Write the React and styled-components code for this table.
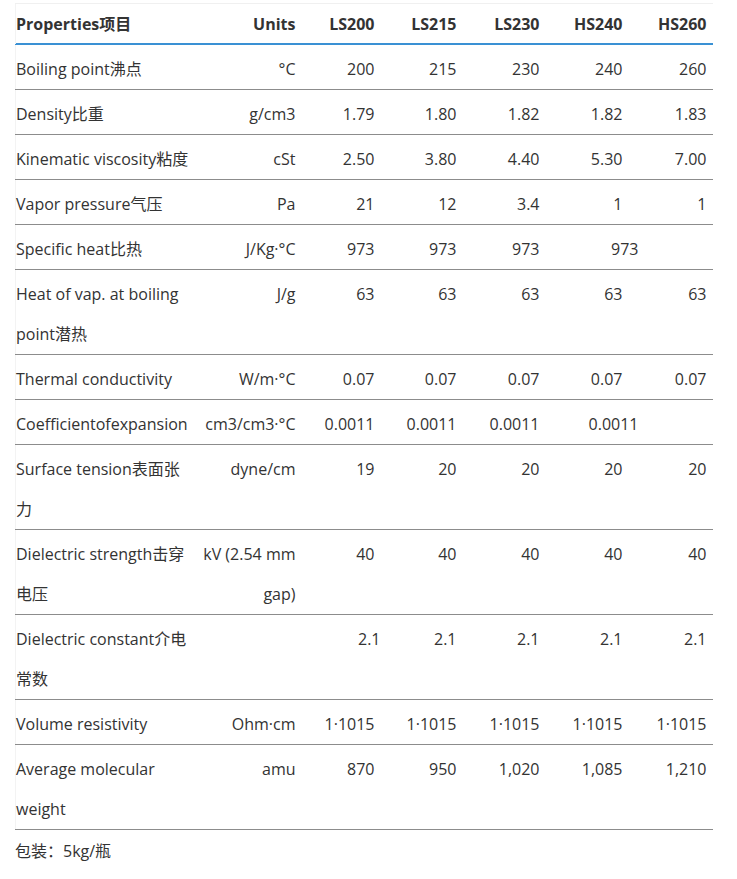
import React from 'react'
import styled, { createGlobalStyle } from 'styled-components'

const GlobalStyle = createGlobalStyle`
  body {
    margin: 0;
    background: #ffffff;
    font-family: "Open Sans", "Noto Sans CJK SC", sans-serif;
    color: #333333;
  }
`;

const Page = styled.div`
  padding: 3px 0 0 15px;
  width: 697px;
`;

const Table = styled.table`
  width: 697px;
  table-layout: fixed;
  border-collapse: collapse;
  border-top: 1px solid #f0f0f0;
  border-left: 1px solid #f3f3f3;
  font-size: 16px;
`;

const HeadCell = styled.th`
  padding: 0 6px 0 0;
  line-height: 40px;
  font-weight: 700;
  text-align: ${(props) => (props.$left ? 'left' : 'right')};
  white-space: nowrap;
  border-bottom: 1px solid #3a91d4;
  box-shadow: inset 0 -1px 0 #3a91d4;
`;

const Row = styled.tr`
  border-bottom: 1px solid #8c8c8c;
`;

const Cell = styled.td`
  padding: 4px ${(props) => props.$pr ?? 6}px 0 0;
  line-height: 40px;
  vertical-align: top;
  text-align: ${(props) => (props.$left ? 'left' : 'right')};
  white-space: nowrap;
`;

const Note = styled.p`
  margin: 9px 0 0 0;
  font-size: 16px;
  line-height: 24px;
`;

const widths = [184, 102, 79, 82, 83, 83, 84];
const heads = ['Units', 'LS200', 'LS215', 'LS230', 'HS240', 'HS260'];

// each value: string, or [text, colSpan, paddingRight]
const rows = [
  { name: ['Boiling point沸点'], unit: ['°C'], vals: ['200', '215', '230', '240', '260'] },
  { name: ['Density比重'], unit: ['g/cm3'], vals: ['1.79', '1.80', '1.82', '1.82', '1.83'] },
  { name: ['Kinematic viscosity粘度'], unit: ['cSt'], vals: ['2.50', '3.80', '4.40', '5.30', '7.00'] },
  { name: ['Vapor pressure气压'], unit: ['Pa'], vals: ['21', '12', '3.4', '1', '1'] },
  { name: ['Specific heat比热'], unit: ['J/Kg·°C'], vals: ['973', '973', '973', ['973', 2, 74]] },
  { name: ['Heat of vap. at boiling', 'point潜热'], unit: ['J/g'], vals: ['63', '63', '63', '63', '63'] },
  { name: ['Thermal conductivity'], unit: ['W/m·°C'], vals: ['0.07', '0.07', '0.07', '0.07', '0.07'] },
  { name: ['Coefficientofexpansion'], unit: ['cm3/cm3·°C'], vals: ['0.0011', '0.0011', '0.0011', ['0.0011', 2, 74]] },
  { name: ['Surface tension表面张', '力'], unit: ['dyne/cm'], vals: ['19', '20', '20', '20', '20'] },
  { name: ['Dielectric strength击穿', '电压'], unit: ['kV (2.54 mm', 'gap)'], vals: ['40', '40', '40', '40', '40'] },
  { name: ['Dielectric constant介电', '常数'], unit: [''], vals: [['2.1', 1, 0], '2.1', '2.1', '2.1', '2.1'] },
  { name: ['Volume resistivity'], unit: ['Ohm·cm'], vals: ['1·1015', '1·1015', '1·1015', '1·1015', '1·1015'] },
  { name: ['Average molecular', 'weight'], unit: ['amu'], vals: ['870', '950', '1,020', '1,085', '1,210'] },
];

const Lines = ({ parts }) =>
  parts.map((p, i) => (
    <React.Fragment key={i}>
      {i > 0 && <br />}
      {p}
    </React.Fragment>
  ));

export default function App() {
  return (
    <Page>
      <GlobalStyle />
      <Table>
        <colgroup>
          {widths.map((w, i) => (
            <col key={i} style={{ width: w }} />
          ))}
        </colgroup>
        <thead>
          <tr>
            <HeadCell $left>Properties项目</HeadCell>
            {heads.map((h) => (
              <HeadCell key={h}>{h}</HeadCell>
            ))}
          </tr>
        </thead>
        <tbody>
          {rows.map((r, i) => (
            <Row key={i}>
              <Cell $left>
                <Lines parts={r.name} />
              </Cell>
              <Cell>
                <Lines parts={r.unit} />
              </Cell>
              {r.vals.map((v, j) =>
                Array.isArray(v) ? (
                  <Cell key={j} colSpan={v[1]} $pr={v[2]}>
                    {v[0]}
                  </Cell>
                ) : (
                  <Cell key={j}>{v}</Cell>
                )
              )}
            </Row>
          ))}
        </tbody>
      </Table>
      <Note>包装：5kg/瓶</Note>
    </Page>
  )
}
